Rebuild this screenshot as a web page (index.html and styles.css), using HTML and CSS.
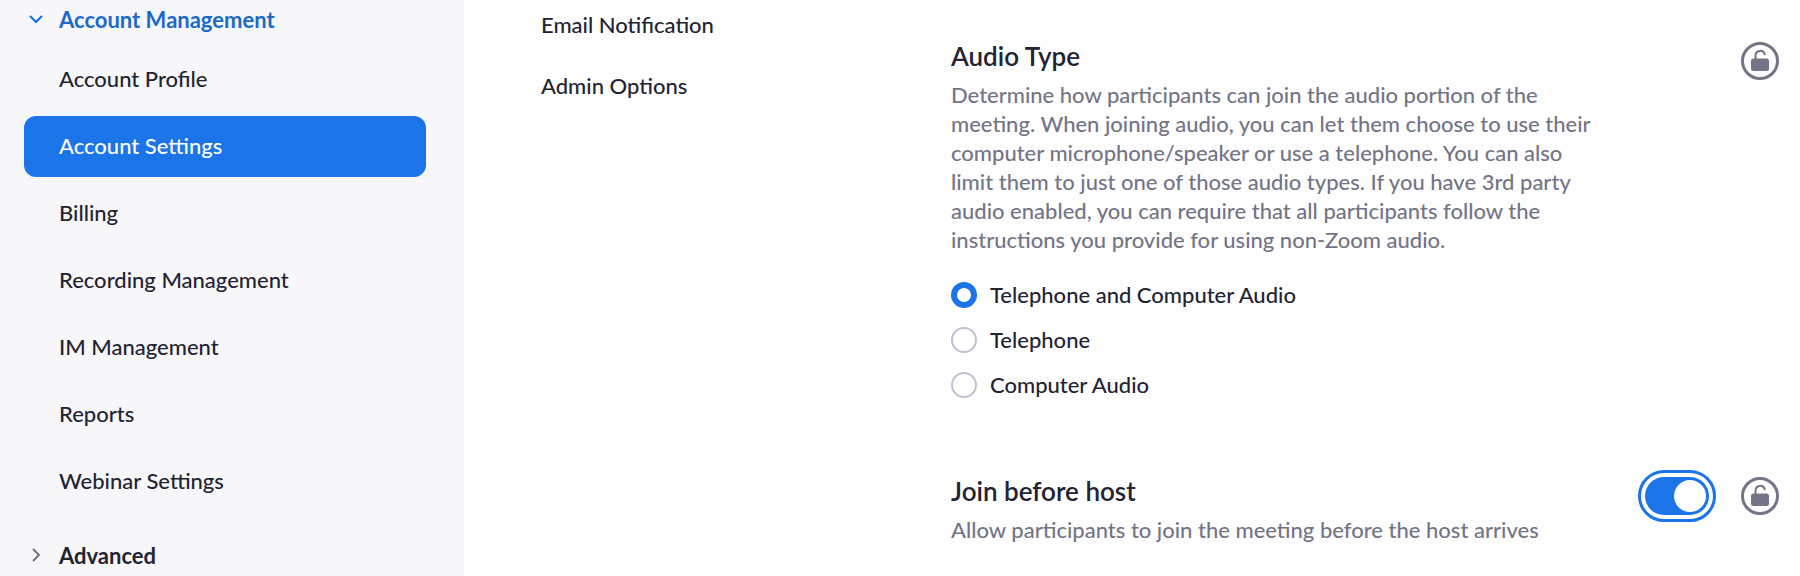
FILE: index.html
```html
<!DOCTYPE html>
<html lang="en">
<head>
<meta charset="utf-8">
<meta name="viewport" content="width=device-width, initial-scale=1">
<title>Account Settings</title>
<link rel="stylesheet" href="styles.css">
</head>
<body>
<div class="layout">
  <nav class="sidebar" aria-label="Account">
    <button class="group group-open" type="button" aria-expanded="true">
      <svg class="chevron" viewBox="0 0 14 14" aria-hidden="true"><path d="M1 4l6 6 6-6"/></svg>
      Account Management
    </button>
    <ul class="menu">
      <li><a class="menu-link" href="#profile">Account Profile</a></li>
      <li><a class="menu-link menu-link-active" href="#settings" aria-current="page">Account Settings</a></li>
      <li><a class="menu-link" href="#billing">Billing</a></li>
      <li><a class="menu-link" href="#recording">Recording Management</a></li>
      <li><a class="menu-link" href="#im">IM Management</a></li>
      <li><a class="menu-link" href="#reports">Reports</a></li>
      <li><a class="menu-link" href="#webinar">Webinar Settings</a></li>
    </ul>
    <button class="group" type="button" aria-expanded="false">
      <svg class="chevron" viewBox="0 0 14 14" aria-hidden="true"><path d="M4 1l6 6-6 6"/></svg>
      Advanced
    </button>
  </nav>
  <nav class="sections" aria-label="Settings sections">
    <a class="section-link" href="#email">Email Notification</a>
    <a class="section-link" href="#admin">Admin Options</a>
  </nav>
  <main class="content">
    <section class="setting">
      <div class="setting-text">
        <h2 class="title" id="audio-title">Audio Type</h2>
        <p class="description">Determine how participants can join the audio portion of the meeting. When joining audio, you can let them choose to use their computer microphone/speaker or use a telephone. You can also limit them to just one of those audio types. If you have 3rd party audio enabled, you can require that all participants follow the instructions you provide for using non-Zoom audio.</p>
        <div class="options" role="radiogroup" aria-labelledby="audio-title">
          <label class="option"><input class="radio" type="radio" name="audio" checked>Telephone and Computer Audio</label>
          <label class="option"><input class="radio" type="radio" name="audio">Telephone</label>
          <label class="option"><input class="radio" type="radio" name="audio">Computer Audio</label>
        </div>
      </div>
      <div class="controls">
        <button class="lock" type="button" aria-label="Lock audio type">
          <svg class="lock-icon" viewBox="0 0 38 38" aria-hidden="true"><circle class="line ring" cx="19" cy="19" r="17.500"/><path class="line" d="M14.500 18v-4.500a4.700 4.700 0 0 1 9.200-1.300"/><rect class="solid" x="10" y="16.500" width="18" height="12.500" rx="2.500"/></svg>
        </button>
      </div>
    </section>
    <section class="setting">
      <div class="setting-text">
        <h2 class="title"><label for="join">Join before host</label></h2>
        <p class="description">Allow participants to join the meeting before the host arrives</p>
      </div>
      <div class="controls">
        <input class="toggle" id="join" type="checkbox" role="switch" checked>
        <button class="lock" type="button" aria-label="Lock join before host">
          <svg class="lock-icon" viewBox="0 0 38 38" aria-hidden="true"><circle class="line ring" cx="19" cy="19" r="17.500"/><path class="line" d="M14.500 18v-4.500a4.700 4.700 0 0 1 9.200-1.300"/><rect class="solid" x="10" y="16.500" width="18" height="12.500" rx="2.500"/></svg>
        </button>
      </div>
    </section>
  </main>
</div>
</body>
</html>
```
FILE: styles.css
```css
* {
  box-sizing: border-box;
}

body {
  margin: 0;
  background: #fff;
  color: #232333;
  font: 500 22px/29px Lato, Carlito, "Open Sans", sans-serif;
}

.layout {
  display: grid;
  grid-template-columns: 464px 487px minmax(0, 1fr);
  min-height: 100vh;
}

.sidebar {
  padding: 0 38px 0 24px;
  background: #f7f7fa;
}

.group {
  display: flex;
  align-items: center;
  gap: 16px;
  height: 38px;
  padding: 0 0 0 5px;
  border: 0;
  background: none;
  color: #232333;
  font: inherit;
  font-weight: 700;
}

.group-open {
  color: #1a6acb;
}

.chevron {
  width: 14px;
  height: 14px;
  fill: none;
  stroke: #747487;
  stroke-width: 2;
}

.group-open .chevron {
  stroke: #0e72ed;
}

.menu {
  display: grid;
  gap: 6px;
  margin: 11px 0 24px;
  padding: 0;
  list-style: none;
}

.menu-link {
  display: block;
  padding: 15px 35px 17px;
  border-radius: 12px;
  color: inherit;
  text-decoration: none;
}

.menu-link-active {
  background: #1c74e9;
  color: #fff;
}

.sections {
  display: flex;
  flex-direction: column;
  align-items: flex-start;
  gap: 32px;
  padding: 10px 77px;
}

.section-link {
  color: inherit;
  text-decoration: none;
}

.content {
  display: grid;
  align-content: start;
  gap: 76px;
  padding: 40px 21px 0 0;
}

.setting {
  display: flex;
  align-items: flex-start;
  justify-content: space-between;
}

.setting-text {
  max-width: 652px;
}

.title {
  margin: 0 0 7px;
  font-size: 26px;
  font-weight: 600;
  line-height: 33px;
}

.description {
  margin: 0;
  color: #747487;
}

.options {
  display: grid;
  justify-items: start;
  gap: 16px;
  margin-top: 26px;
}

.option {
  display: flex;
  align-items: center;
  gap: 13px;
}

.radio {
  appearance: none;
  width: 26px;
  height: 26px;
  margin: 0;
  border: 2px solid #c1c1d3;
  border-radius: 50%;
  background: #fff;
}

.radio:checked {
  border: 6px solid #1c74e9;
}

.controls {
  display: flex;
  align-items: center;
  gap: 32px;
  padding-top: 2px;
}

.toggle {
  appearance: none;
  display: flex;
  align-items: center;
  width: 64px;
  height: 38px;
  margin: 0;
  padding: 3px;
  border-radius: 19px;
  background: #babacc;
}

.toggle::before {
  content: "";
  width: 32px;
  height: 32px;
  border-radius: 50%;
  background: #fff;
}

.toggle:checked {
  justify-content: flex-end;
  background: #1c74e9;
  outline: 3px solid #1c74e9;
  outline-offset: 4px;
}

.lock {
  padding: 0;
  border: 0;
  background: none;
}

.lock-icon {
  display: block;
  width: 38px;
  height: 38px;
}

.line {
  fill: none;
  stroke: #747487;
  stroke-width: 2;
  stroke-linecap: round;
}

.ring {
  stroke-width: 3;
}

.solid {
  fill: #747487;
}
```
